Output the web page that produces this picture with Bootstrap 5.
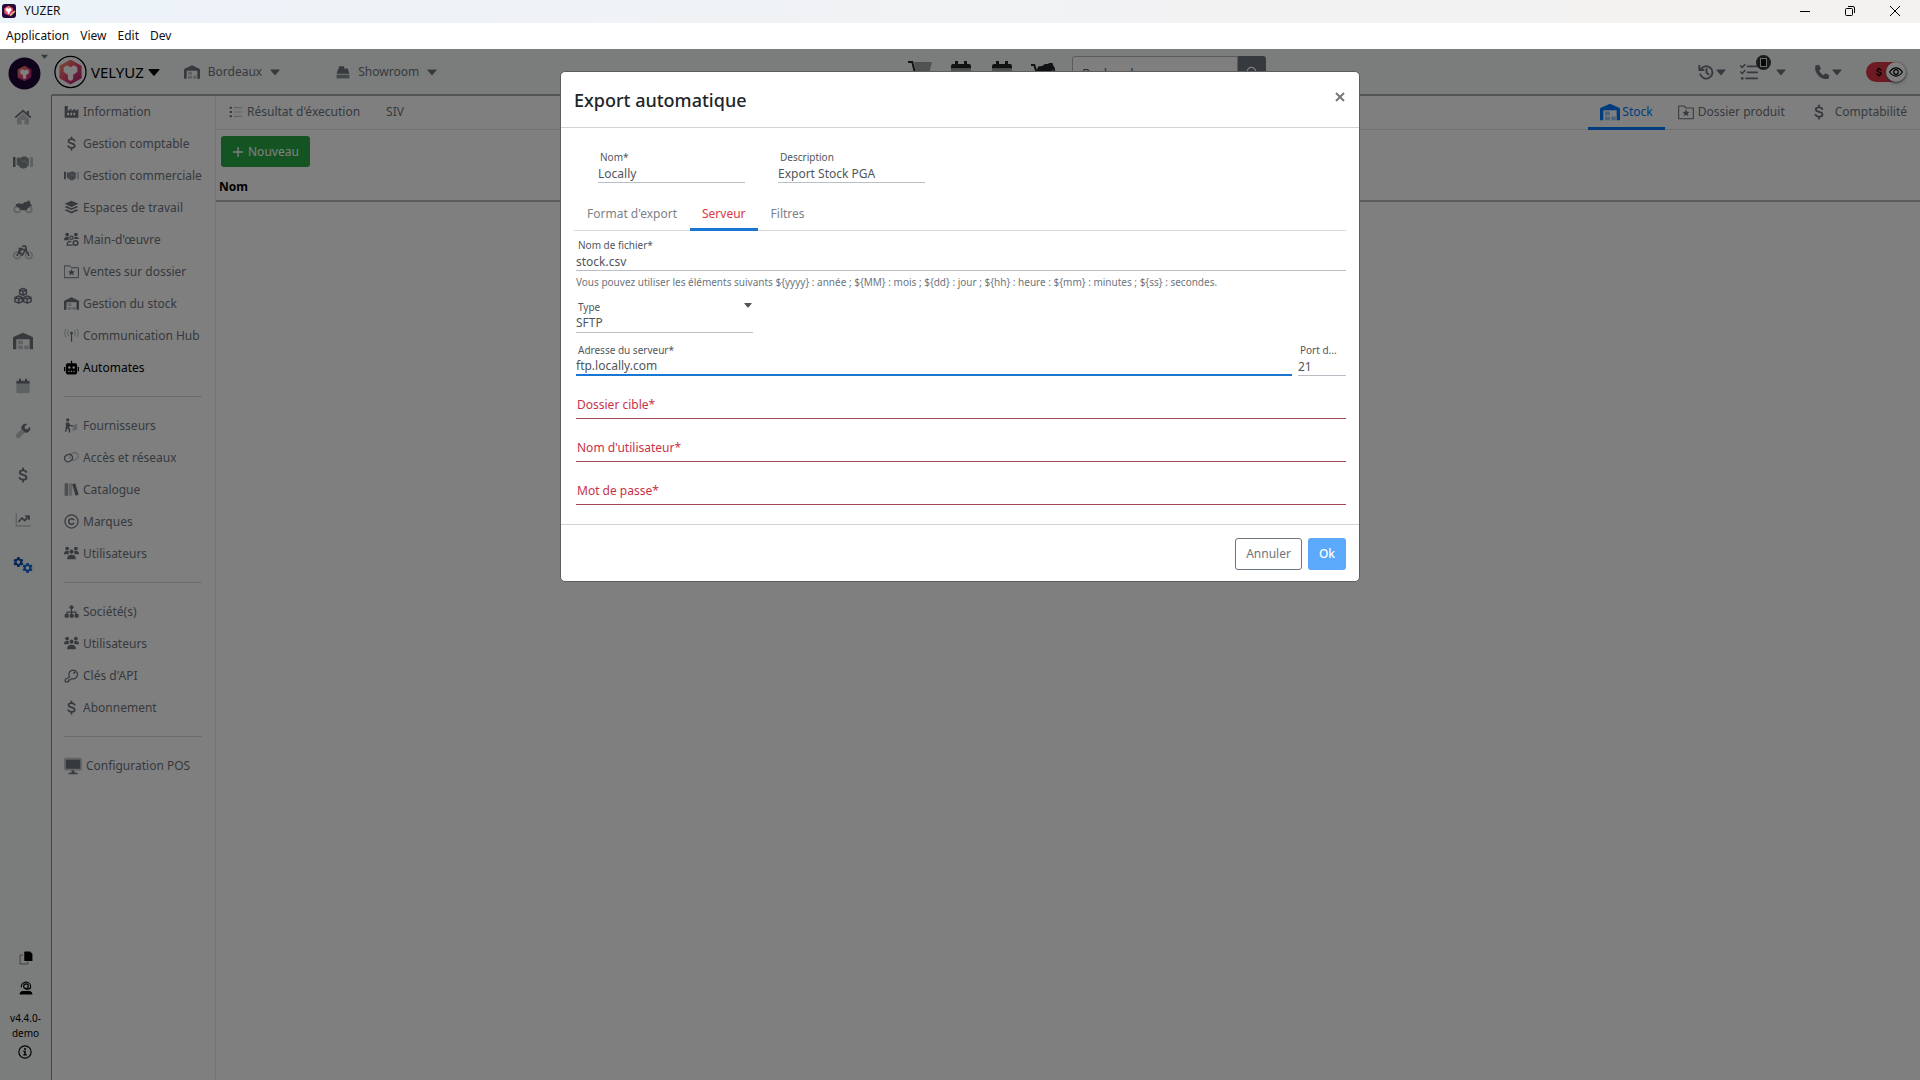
<!DOCTYPE html>
<html lang="fr">
<head>
<meta charset="utf-8">
<meta name="viewport" content="width=device-width, initial-scale=1">
<title>YUZER</title>
<link href="https://cdn.jsdelivr.net/npm/bootstrap@5.3.0/dist/css/bootstrap.min.css" rel="stylesheet">
<style>
:root{--rail:52px;--muted:#6c757d;--blue:#1976d2}
body{font-family:"Noto Sans","Open Sans",sans-serif;font-size:12px;line-height:20px;color:#212529;overflow:hidden}
a{color:inherit;text-decoration:none}
svg{fill:currentColor;flex:none;display:block}
.s2{opacity:.4}
.ln{fill:none;stroke:currentColor;stroke-width:2;stroke-linecap:round;stroke-linejoin:round}
.i10{width:10px;height:10px}.i12{width:12px;height:12px}.i14{width:14px;height:14px}.i16{width:16px;height:16px}.i18{width:18px;height:18px}.i20{width:20px;height:20px}.i24{width:24px;height:24px}
.titlebar{height:23px;background:linear-gradient(90deg,#ecf3f9,#f3f2f2 75%,#f3f2f0);color:#111;padding:0 3px 2px 2px}
.winbtn{width:45px;border:0;background:none;padding:0;display:flex;justify-content:center;align-items:center;color:#000}
.menubar{height:26px;background:#fff;color:#111;gap:11px;padding:0 6px}
.chrome-bg{background:#f6faf8}
.rail-col{width:var(--rail)}
.rail-head{height:46px}
.rail{border-right:1px solid #8b9090;color:var(--muted)}
.rail-list{height:492px}
.rail-item{flex:1 1 0;display:flex;align-items:center;justify-content:center;padding-right:6px}
.rail-foot{gap:16px;padding-bottom:21px;color:#000}
.topbar{height:47px;border-bottom:2px solid #a3a8a8}
.site-menu{color:var(--muted)}
.site-left{width:856px}
.brand{font-size:15px;color:#000;margin-left:2px}
.quick{gap:17px;color:#212529}
.finder .form-control{width:166px;height:32px;font-size:13px;border:1px solid #b0b4b8;border-radius:3px 0 0 3px;padding:2px 9px 0}
.finder .btn{width:28px;height:32px;padding:0;background:var(--muted);border:0;color:#fff;border-radius:0 3px 3px 0}
.tools{padding-right:14px}
.tools a{display:flex;align-items:center;gap:2px}
.tools .todo{gap:18px;margin:0 28px 0 14px}
.todo-count{position:absolute;left:16px;top:-8px}
.side{width:164px;border-right:1px solid #e6e6e6;color:var(--muted);padding:0 13px 0 12px}
.side-link{height:32px;display:flex;align-items:center;gap:4px;white-space:nowrap;padding-bottom:1px}
.side-link svg{width:15px;height:15px}
.side-link svg.i18{width:18px;height:18px}
.side-link.on{color:#000}
.side hr{margin:12px 0 13px;border-color:#777;opacity:.3}
.tabs-top{height:34px;border-bottom:1px solid #dee2e6;color:var(--muted)}
.tabs-top a{display:flex;align-items:center;gap:4px;height:34px;padding:0 13px;border-bottom:3px solid transparent}
.tabs-top a.on{color:#007bff;border-color:#007bff;gap:2px;padding:0 12px}
.list-tools{padding:6px 5px 4px}
.btn-new{background:#28a745;color:#fff;font-size:12px;height:31px;padding:0 10px;border-radius:3px;display:flex;align-items:center;gap:4px}
.grid-head th{padding:5px 3px 3px;border-bottom:2px solid #b5b8bb;color:#000;height:30px}
.switch-pill{width:40px;height:20px;border-radius:10px;background:#dc3545;display:flex;align-items:center;justify-content:space-between;padding-left:8px}
.switch-knob{width:20px;height:20px;border-radius:50%;background:#fff;color:#000;display:flex;align-items:center;justify-content:center;box-shadow:0 1px 3px #555}
.version{font-size:10px;line-height:15px;text-align:center}
.shade{position:absolute;inset:0;background:rgba(0,0,0,.5)}
.dialog-layer{position:absolute;inset:0}
.dialog-layer .modal-dialog{max-width:800px;margin:22px auto 0}
.dialog-layer .modal-content{border:1px solid #5d5d5d;border-radius:5px;background:#fff}
.dialog-layer .modal-header{height:56px;padding:0 14px 0 13px;border-bottom:1px solid #d0d4d6}
.dialog-layer .modal-title{font-size:18px;line-height:28px;font-weight:500}
.dialog-layer .modal-body{padding:22px 13px 19px 15px}
.dialog-layer .modal-footer{height:57px;padding:1px 13px 0;gap:6px;border-top:1px solid #d0d4d6}
.dialog-layer .modal-footer>*{margin:0}
.shut{border:0;background:none;padding:0;width:10px;color:#777;margin-bottom:6px}
.pair{gap:33px;padding-left:22px}
.fld{position:relative;color:#50565c}
.fld label{display:block;font-size:10px;line-height:14px;padding-left:2px;white-space:nowrap}
.fld input,.fld select{display:block;width:100%;height:19px;border:0;border-bottom:1px solid #b9bfc4;border-radius:0;padding:0;font-size:12px;line-height:18px;color:#50565c;background:none;outline:0;appearance:none}
.fld.now input{border-bottom:2px solid var(--blue)}
.fld.need{padding-top:14px;color:#c8324a}
.fld.need input{border-color:#a34855}
.fld.need label{position:absolute;left:0;bottom:5px;font-size:12px;line-height:18px;padding-left:1px}
.short{width:147px}.kind{width:177px}.port{width:48px}
.fld .drop{position:absolute;right:1px;top:1px}
.dtabs{height:41px;border-bottom:1px solid #d5dadd;margin:7px 0 7px -2px;color:#7b8289}
.dtabs a{height:41px;padding:9px 13px 0;display:flex;align-items:center;border-bottom:3px solid transparent}
.dtabs a.on{color:#dc3545;border-color:var(--blue);padding:9px 12px 0}
.hint{font-size:10px;line-height:18px;color:var(--muted);margin:2px 0 9px}
.stack{gap:10px}
.duo{gap:6px}
.btn-act{height:32px;font-size:12px;padding:0 10px;border-radius:3px}
.btn-cancel{border:1px solid #6c757d;color:#6c757d}
.btn-ok{background:#5aa9fb;color:#fff;font-weight:500}
</style>
<script src="https://cdn.jsdelivr.net/npm/bootstrap@5.3.0/dist/js/bootstrap.bundle.min.js"></script>
</head>
<body class="d-flex flex-column vh-100">
<svg width="0" height="0" class="position-absolute" aria-hidden="true">
<defs><linearGradient id="hot" x1="0" y1="0" x2="1" y2="1"><stop offset="0" stop-color="#f6a06a"/><stop offset=".5" stop-color="#e8456e"/><stop offset="1" stop-color="#9c1f7d"/></linearGradient></defs>
<symbol id="caret" viewBox="0 0 12 12"><path d="M1 3h10q.8.2.3 1L6.600 9.600q-.6.5-1.200 0L.7 4Q.3 3.200 1 3z"/></symbol>
<symbol id="home" viewBox="0 0 24 24"><path class="s2" d="M12 7l-8 7v8h6v-6h4v6h6v-8z"/><path d="M12 2L.8 12l1.600 1.800L12 5.400l9.600 8.400 1.600-1.800-3.200-2.900V4h-3v2.500z"/></symbol>
<symbol id="shake" viewBox="0 0 24 24"><path d="M0 6h3v12H0z"/><path d="M4.500 7H9l3-1.500h3.500L19 8v7.500l-2.500 3-4 1.500-4-1.500-2.500-3H4.500z" opacity=".85"/><path d="M10 10.500q2 2 4.500 0l4 4" fill="none" stroke="#fff" stroke-opacity=".5"/><path class="s2" d="M20.500 6H24v12h-3.500z"/></symbol>
<symbol id="moto" viewBox="0 0 24 24"><path d="M3 9l4-1.500 4 1 3-2.500h4l-1.500-1.500H20l1 4 2 2-3 .5-4 5h-6l-3-3.500L4 11z"/><circle class="ln s2" cx="5" cy="15" r="3.500"/><circle class="ln s2" cx="19" cy="15" r="3.500"/></symbol>
<symbol id="bike" viewBox="0 0 24 24"><g class="ln"><circle class="s2" cx="5" cy="16" r="4"/><circle class="s2" cx="19" cy="16" r="4"/><path d="M5 16l4-7h6l-4 7-4-5M15 9l4 7M12 5h3l1 4"/></g><path d="M6 7h6l-3 5z"/></symbol>
<symbol id="boxes" viewBox="0 0 24 24"><g class="ln"><path d="M12 2l4.500 2v5L12 11 7.500 9V4zM6.300 12l4.700 2v5.500l-4.700 2-5-2V14zM17.700 12l5 2v5.500l-5 2-4.700-2V14zM7.500 4L12 6l4.500-2M12 6v5M1.500 14l4.800 2 4.700-2M6.300 16v5M13 14l4.700 2 5-2M17.700 16v5"/></g></symbol>
<symbol id="depot" viewBox="0 0 24 24"><path d="M0 22V8.500q0-1 1-1.500L12 2l11 5q1 .5 1 1.500V22h-4V10H4v12z"/><path class="s2" d="M6 11.500h6V16H6zM6 17.500h6V22H6zM13.500 17.500H19V22h-5.500z"/></symbol>
<symbol id="cal" viewBox="0 0 24 24"><path class="s2" d="M2 9h20v12q0 2-2 2H4q-2 0-2-2z"/><path d="M2 8.500V6q0-2 2-2h2V1h3v3h6V1h3v3h2q2 0 2 2v2.500z"/></symbol>
<symbol id="wrench" viewBox="0 0 24 24"><path class="s2" d="M10 9l5 5-8 8.500q-2.500 1.500-5-1-2-2.500 0-4.500z"/><path d="M22.500 5.500L18.500 9.500l-3.500-.6-.6-3.500 4-4C14 0 9 3 9.500 8.500l6 6C21 15 24 10 22.500 5.500z"/></symbol>
<symbol id="usd" viewBox="0 0 24 24"><path class="ln" style="stroke-width:2.800" d="M17 7.500C16 5.500 14 5 12 5c-3 0-4.800 1.200-4.800 3.400 0 4.600 10 2.400 10 7.200C17.200 18 15 19 12 19c-2.400 0-4.400-.8-5.200-2.800M12 2v3M12 19v3"/></symbol>
<symbol id="chart" viewBox="0 0 24 24"><path class="ln s2" d="M2 3v18h21"/><path class="ln" style="stroke-width:2.600" d="M6 14l4.500-5 4 4L20 7M16 6h5v5"/></symbol>
<symbol id="cog" viewBox="0 0 24 24"><path fill-rule="evenodd" d="M9.500 1h5l.6 3.200 2.400 1.400 3-1.100 2.500 4.300-2.500 2.100v2.200l2.500 2.100-2.500 4.300-3-1.100-2.400 1.400-.6 3.200h-5l-.6-3.200-2.400-1.400-3 1.100L1 15.200l2.500-2.100v-2.200L1 8.800l2.500-4.300 3 1.100 2.400-1.400zM12 8a4 4 0 100 8 4 4 0 000-8z"/></symbol>
<symbol id="cogs" viewBox="0 0 24 24"><use href="#cog" width="13" height="13" y="2" color="#0a4fae"/><use href="#cog" width="13" height="13" x="11" y="9"/></symbol>
<symbol id="factory" viewBox="0 0 24 24"><path fill-rule="evenodd" d="M1 3h5v8l6-4v4l6-4v4l5-3v14H1zM5 14v4h3v-4zm5 0v4h3v-4zm5 0v4h3v-4z"/></symbol>
<symbol id="layers" viewBox="0 0 24 24"><path d="M12 1l11 5-11 5L1 6zM4 9.500l8 3.700 8-3.700 3 1.500-11 5-11-5zM4 14.700l8 3.700 8-3.700 3 1.500-11 5.500-11-5.500z"/></symbol>
<symbol id="crew" viewBox="0 0 24 24"><circle cx="5" cy="4" r="3"/><circle cx="19" cy="4" r="3"/><circle cx="12" cy="9" r="3.300"/><path d="M0 13q0-5 4-5h3.500l0 5zM24 13q0-5-4-5h-3.500l0 5zM5 21q0-7 7-7t7 7z"/></symbol>
<symbol id="staff" viewBox="0 0 24 24"><circle cx="5" cy="4" r="3"/><circle cx="19" cy="4" r="3"/><circle class="ln" cx="12" cy="9" r="2.600"/><path d="M0 13q0-5 4-5h3.500l0 5zM24 11q0-3-4-3h-3.500l0 3z"/><path class="ln" d="M5 21q0-6 6-6M5 21h8"/><circle class="ln" style="stroke-width:2.600" cx="18.500" cy="17.500" r="3.600"/></symbol>
<symbol id="folder" viewBox="0 0 24 24"><path class="ln" style="stroke-width:1.600" d="M1 3h8l3 3h11v16H1z"/><path d="M12 8l1.600 3.600 3.900.3-3 2.500 1 3.800-3.500-2.100-3.500 2.100 1-3.800-3-2.500 3.900-.3z"/></symbol>
<symbol id="hub" viewBox="0 0 24 24"><circle cx="12" cy="8" r="2.400"/><path d="M11 9h2v13h-2z"/><path class="ln s2" d="M7 4q-2 4 0 8M3 2q-3.500 6 0 12M17 4q2 4 0 8M21 2q3.500 6 0 12"/></symbol>
<symbol id="bot" viewBox="0 0 24 24"><path fill-rule="evenodd" d="M11 1h2v4h5q3 0 3 3v12q0 3-3 3H6q-3 0-3-3V8q0-3 3-3h5zM8.500 10a2 2 0 100 4 2 2 0 000-4zm7 0a2 2 0 100 4 2 2 0 000-4zM7 17v2h2v-2zm4 0v2h2v-2zm4 0v2h2v-2zM0 11h2v7H0zM22 11h2v7h-2z"/></symbol>
<symbol id="carry" viewBox="0 0 24 24"><circle cx="6" cy="3" r="2.600"/><path d="M3 7h5l2 4h4v2H9l-1 2 2 3v5H7.500v-4L5 16l-1 6H1.500L3 14z"/><path class="s2" d="M14 12l7-3v9l-7 3z"/></symbol>
<symbol id="rings" viewBox="0 0 24 24"><rect class="ln" x="1" y="7" width="13" height="11" rx="5.500" transform="rotate(-30 8 13)"/><rect class="ln s2" x="10" y="5" width="13" height="11" rx="5.500" transform="rotate(-30 16 11)"/></symbol>
<symbol id="books" viewBox="0 0 24 24"><path d="M1 2h5.500v20H1z" opacity=".7"/><path class="s2" d="M7.500 2H13v20H7.500z"/><path d="M13 3.500l5-1.500L23.500 20.500 18.500 22z"/></symbol>
<symbol id="copyr" viewBox="0 0 24 24"><circle class="ln" cx="12" cy="12" r="10.500"/><path class="ln" style="stroke-width:2.400" d="M15.500 9c-3-3-8-1-8 3s5 6 8 3"/></symbol>
<symbol id="org" viewBox="0 0 24 24"><circle cx="12" cy="5" r="3.200"/><path d="M11 8h2v4h7v4h-2v-2h-5v2h-2v-2H6v2H4v-4h7z"/><rect x="1" y="15.500" width="6.500" height="6.500" rx="2"/><rect x="9" y="15.500" width="6.500" height="6.500" rx="2"/><rect x="17" y="15.500" width="6.500" height="6.500" rx="2"/></symbol>
<symbol id="key" viewBox="0 0 24 24"><path class="ln" d="M9 14.500a7 7 0 113.500 2.500L10 19H7.500v3H2v-4z"/><circle cx="16.500" cy="7.500" r="1.800"/></symbol>
<symbol id="screen" viewBox="0 0 24 24"><rect class="s2" x="0" y="1" width="24" height="17" rx="2"/><path d="M2.500 3.500h19v12h-19zM10 18h4v3h4v2H6v-2h4z"/></symbol>
<symbol id="list" viewBox="0 0 24 24"><path d="M1 3h4v3.500H1zM1 10.300h4v3.500H1zM1 17.500h4V21H1z"/><path class="s2" d="M8 3.500h15v2H8zM8 11h15v2H8zM8 18.500h15v2H8z"/></symbol>
<symbol id="plus" viewBox="0 0 12 12"><path d="M5.300 1h1.400v4.300H11v1.400H6.700V11H5.300V6.700H1V5.300h4.300z"/></symbol>
<symbol id="till" viewBox="0 0 24 24"><path d="M5 2h9v4h6l3 9H1l3-9h1z"/><path d="M1 16.500h22V23H1z" opacity=".8"/></symbol>
<symbol id="cart" viewBox="0 0 24 24"><path class="s2" d="M6 2h18l-3 12H8z"/><path d="M0 1h5l3.500 14H20v2H7L3.500 3H0z"/><circle cx="9" cy="20.500" r="2"/><circle cx="18.500" cy="20.500" r="2"/></symbol>
<symbol id="motocart" viewBox="0 0 24 24"><path d="M0 4h4l3.500 11H20v2H6L2.500 6H0z"/><path d="M7 6.500l4-.5 3-2h4l-1-1h4.500l1 3 1.500 2-2 .5-1 4-4-.5-4 2-4-1-3 0z"/><circle class="ln" cx="21" cy="11" r="2.500"/><circle class="ln" cx="9" cy="11" r="2.500"/></symbol>
<symbol id="lens" viewBox="0 0 24 24"><circle class="ln" cx="11" cy="11" r="7"/><path class="ln" d="M16 16l6 6"/></symbol>
<symbol id="past" viewBox="0 0 24 24"><path class="ln" style="stroke-width:2.800" d="M4 8.500a9.300 9.300 0 11-.5 7M2 2.500v6.500h6.500M12.800 7.500v5.500l3 2.500"/></symbol>
<symbol id="tasks" viewBox="0 0 24 24"><path class="ln" style="stroke-width:2.200" d="M1 4l2 2 3.500-4M1 12l2 2 3.500-4M10 4.500h13M10 12.500h13M8 20.500h15"/><circle cx="3" cy="20.500" r="1.800"/></symbol>
<symbol id="tel" viewBox="0 0 24 24"><path d="M7.500 1L2 2.300Q.5 12 7 17.500 12 23.500 21.700 22.500L23 16.800l-6-3-2.700 2.900Q9.500 14.500 7.700 9.700L10.500 7z"/></symbol>
<symbol id="eye" viewBox="0 0 24 24"><path class="ln" d="M1 12Q6 5 12 5t11 7q-5 7-11 7T1 12z"/><circle class="ln" cx="12" cy="12" r="4"/></symbol>
<symbol id="copy" viewBox="0 0 24 24"><path d="M10 1h9l4 4v12H10q-1 0-1-1V2q0-1 1-1z"/><path class="ln s2" d="M6 7H2v15h13v-3"/></symbol>
<symbol id="agent" viewBox="0 0 24 24"><path class="ln" d="M4 10a8 8 0 0116 0q0 4-5 4h-3"/><circle class="ln" cx="12" cy="9" r="4"/><path d="M1 23q0-6 6-6h10q6 0 6 6z"/></symbol>
<symbol id="info" viewBox="0 0 24 24"><circle class="ln" cx="12" cy="12" r="10.500"/><circle cx="12" cy="6.800" r="1.700"/><path d="M9 10h4.300v6H15v2H9v-2h1.700v-4H9z"/></symbol>
<symbol id="hexy" viewBox="0 0 24 24"><path fill="url(#hot)" d="M12 0l10.500 6v12L12 24 1.500 18V6z"/><path fill="#fff" d="M5.500 7.500L9 5.500l3 2 3-2 3.500 2v4.500l-4 2.500V19L12 20.500 9.500 19v-4.500l-4-2.500z"/></symbol>
</svg>

<header class="titlebar d-flex align-items-stretch">
  <div class="d-flex align-items-center gap-2 me-auto">
    <svg width="14" height="14" viewBox="0 0 24 24"><rect width="24" height="24" rx="5" fill="#24093a"/><use href="#hexy" x="3" y="3" width="17" height="17"/><path d="M14 20l8-8" stroke="#f4b37b" stroke-width="3"/></svg>
    <span>YUZER</span>
  </div>
  <button class="winbtn" aria-label="Réduire"><svg class="i10" viewBox="0 0 10 10"><path d="M0 5h10v1H0z"/></svg></button>
  <button class="winbtn" aria-label="Restaurer"><svg class="i10" viewBox="0 0 10 10" stroke="#000"><g fill="none"><rect x=".5" y="2.500" width="7" height="7" rx="1"/><path d="M3 .5h5q1.500 0 1.500 1.500v5"/></g></svg></button>
  <button class="winbtn" aria-label="Fermer"><svg class="i10" viewBox="0 0 10 10"><path d="M0 0l10 10M10 0L0 10" stroke="#000"/></svg></button>
</header>
<nav class="menubar d-flex align-items-center">
  <a href="#">Application</a><a href="#">View</a><a href="#">Edit</a><a href="#">Dev</a>
</nav>

<main class="position-relative flex-grow-1 d-flex overflow-hidden">
  <div class="rail-col chrome-bg d-flex flex-column flex-shrink-0">
    <div class="rail-head d-flex justify-content-end align-items-start pt-1 pe-1">
      <svg class="mt-1" width="33" height="33" viewBox="0 0 34 34"><circle cx="17" cy="17" r="16.500" fill="#1e0638"/><use href="#hexy" x="9" y="9" width="16" height="16"/></svg>
      <svg width="7" height="7" style="color:#6c757d"><use href="#caret"/></svg>
    </div>
    <nav class="rail flex-grow-1 d-flex flex-column">
      <div class="rail-list d-flex flex-column">
        <a class="rail-item" href="#" aria-label="Accueil"><svg class="i18"><use href="#home"/></svg></a>
        <a class="rail-item" href="#" aria-label="Commerce"><svg class="i20"><use href="#shake"/></svg></a>
        <a class="rail-item" href="#" aria-label="Motos"><svg class="i20"><use href="#moto"/></svg></a>
        <a class="rail-item" href="#" aria-label="Vélos"><svg class="i20"><use href="#bike"/></svg></a>
        <a class="rail-item" href="#" aria-label="Pièces"><svg class="i18"><use href="#boxes"/></svg></a>
        <a class="rail-item" href="#" aria-label="Stock"><svg class="i20"><use href="#depot"/></svg></a>
        <a class="rail-item" href="#" aria-label="Agenda"><svg class="i16"><use href="#cal"/></svg></a>
        <a class="rail-item" href="#" aria-label="Atelier"><svg class="i16"><use href="#wrench"/></svg></a>
        <a class="rail-item" href="#" aria-label="Comptabilité"><svg class="i16"><use href="#usd"/></svg></a>
        <a class="rail-item" href="#" aria-label="Statistiques"><svg class="i16"><use href="#chart"/></svg></a>
        <a class="rail-item" href="#" aria-label="Configuration" style="color:#0f6bdc"><svg class="i20"><use href="#cogs"/></svg></a>
      </div>
      <div class="rail-foot mt-auto d-flex flex-column align-items-center">
        <a href="#" aria-label="Copier"><svg class="i14"><use href="#copy"/></svg></a>
        <a href="#" aria-label="Assistance"><svg class="i14"><use href="#agent"/></svg></a>
        <div class="version">v4.4.0-<br>demo<a href="#" aria-label="À propos" class="d-flex justify-content-center pt-1"><svg class="i14"><use href="#info"/></svg></a></div>
      </div>
    </nav>
  </div>

  <div class="flex-grow-1 d-flex flex-column bg-white">
    <div class="topbar chrome-bg d-flex align-items-center site-menu">
      <div class="site-left d-flex align-items-center">
        <a href="#" class="brand d-flex align-items-center">
          <svg width="33" height="34" viewBox="0 0 34 34"><circle cx="17" cy="17" r="16" fill="#fff" stroke="#000" stroke-width="1.300"/><use href="#hexy" x="4" y="4" width="26" height="26"/></svg>
          <span class="ps-1">VELYUZ</span><svg class="i12 ms-1"><use href="#caret"/></svg>
        </a>
        <a href="#" class="d-flex align-items-center gap-2 ms-4"><svg class="i16"><use href="#depot"/></svg>Bordeaux<svg class="i10"><use href="#caret"/></svg></a>
        <a href="#" class="d-flex align-items-center gap-2 ms-5 ps-2"><svg class="i14"><use href="#till"/></svg>Showroom<svg class="i10"><use href="#caret"/></svg></a>
      </div>
      <div class="quick d-flex align-items-center">
        <svg class="i24"><use href="#cart"/></svg>
        <svg class="i24"><use href="#cal"/></svg>
        <svg class="i24"><use href="#cal"/></svg>
        <svg class="i24"><use href="#motocart"/></svg>
        <div class="finder d-flex"><input class="form-control" type="search" placeholder="Rechercher" aria-label="Rechercher"><button class="btn" aria-label="Lancer la recherche"><svg class="i14 mx-auto"><use href="#lens"/></svg></button></div>
      </div>
      <div class="tools d-flex align-items-center ms-auto">
        <a href="#" aria-label="Historique"><svg class="i16"><use href="#past"/></svg><svg class="i10"><use href="#caret"/></svg></a>
        <a href="#" aria-label="Tâches" class="todo"><span class="position-relative"><svg class="i18"><use href="#tasks"/></svg>
          <svg class="todo-count" width="15" height="15" viewBox="0 0 15 15"><circle cx="7.500" cy="7.500" r="7.500" fill="#343a40"/><rect x="4.500" y="3.500" width="6" height="8" fill="#111" stroke="#ddd"/></svg></span>
          <svg class="i10"><use href="#caret"/></svg></a>
        <a href="#" aria-label="Téléphone" class="me-4"><svg class="i16"><use href="#tel"/></svg><svg class="i10"><use href="#caret"/></svg></a>
        <label class="switch-pill"><input type="checkbox" class="visually-hidden" checked aria-label="Afficher les montants"><svg class="i10 text-black"><use href="#usd"/></svg><span class="switch-knob"><svg class="i14"><use href="#eye"/></svg></span></label>
      </div>
    </div>
    <div class="flex-grow-1 d-flex">
      <nav class="side flex-shrink-0">
        <a class="side-link" href="#"><svg><use href="#factory"/></svg>Information</a>
        <a class="side-link" href="#"><svg><use href="#usd"/></svg>Gestion comptable</a>
        <a class="side-link" href="#"><svg><use href="#shake"/></svg>Gestion commerciale</a>
        <a class="side-link" href="#"><svg><use href="#layers"/></svg>Espaces de travail</a>
        <a class="side-link" href="#"><svg><use href="#staff"/></svg>Main-d'œuvre</a>
        <a class="side-link" href="#"><svg><use href="#folder"/></svg>Ventes sur dossier</a>
        <a class="side-link" href="#"><svg><use href="#depot"/></svg>Gestion du stock</a>
        <a class="side-link" href="#"><svg><use href="#hub"/></svg>Communication Hub</a>
        <a class="side-link on" href="#"><svg><use href="#bot"/></svg>Automates</a>
        <hr>
        <a class="side-link" href="#"><svg><use href="#carry"/></svg>Fournisseurs</a>
        <a class="side-link" href="#"><svg><use href="#rings"/></svg>Accès et réseaux</a>
        <a class="side-link" href="#"><svg><use href="#books"/></svg>Catalogue</a>
        <a class="side-link" href="#"><svg><use href="#copyr"/></svg>Marques</a>
        <a class="side-link" href="#"><svg><use href="#crew"/></svg>Utilisateurs</a>
        <hr>
        <a class="side-link" href="#"><svg><use href="#org"/></svg>Société(s)</a>
        <a class="side-link" href="#"><svg><use href="#crew"/></svg>Utilisateurs</a>
        <a class="side-link" href="#"><svg><use href="#key"/></svg>Clés d'API</a>
        <a class="side-link" href="#"><svg><use href="#usd"/></svg>Abonnement</a>
        <hr>
        <a class="side-link" href="#"><svg class="i18"><use href="#screen"/></svg>Configuration POS</a>
      </nav>
      <section class="flex-grow-1">
        <nav class="tabs-top d-flex">
          <a href="#"><svg class="i14"><use href="#list"/></svg>Résultat d'éxecution</a>
          <a href="#" class="me-auto">SIV</a>
          <a href="#" class="on"><svg class="i20"><use href="#depot"/></svg>Stock</a>
          <a href="#"><svg class="i16"><use href="#folder"/></svg>Dossier produit</a>
          <a href="#"><svg class="i16 me-1"><use href="#usd"/></svg>Comptabilité</a>
        </nav>
        <div class="list-tools"><button class="btn btn-new"><svg class="i12"><use href="#plus"/></svg>Nouveau</button></div>
        <table class="w-100 grid-head"><thead><tr><th scope="col" class="align-bottom">Nom</th></tr></thead></table>
      </section>
    </div>
  </div>

  <div class="shade"></div>
  <div class="dialog-layer" role="dialog" aria-modal="true" aria-labelledby="dlgTitle">
    <div class="modal-dialog">
      <form class="modal-content">
        <div class="modal-header">
          <h1 class="modal-title" id="dlgTitle">Export automatique</h1>
          <button type="button" class="shut" aria-label="Fermer"><svg class="i10" viewBox="0 0 10 10"><path d="M1 1l8 8M9 1L1 9" stroke="currentColor" stroke-width="2"/></svg></button>
        </div>
        <div class="modal-body">
          <div class="pair d-flex">
            <div class="fld short"><label for="f1">Nom*</label><input id="f1" value="Locally"></div>
            <div class="fld short"><label for="f2">Description</label><input id="f2" value="Export Stock PGA"></div>
          </div>
          <nav class="dtabs d-flex"><a href="#">Format d'export</a><a href="#" class="on">Serveur</a><a href="#">Filtres</a></nav>
          <div>
            <div class="fld"><label for="f3">Nom de fichier*</label><input id="f3" value="stock.csv"></div>
            <p class="hint">Vous pouvez utiliser les éléments suivants ${yyyy} : année ; ${MM} : mois ; ${dd} : jour ; ${hh} : heure : ${mm} : minutes ; ${ss} : secondes.</p>
            <div class="stack d-flex flex-column">
              <div class="fld kind"><label for="f4">Type</label><select id="f4"><option>SFTP</option></select><svg class="drop" width="8" height="8"><use href="#caret"/></svg></div>
              <div class="duo d-flex">
                <div class="fld now flex-grow-1"><label for="f5">Adresse du serveur*</label><input id="f5" value="ftp.locally.com"></div>
                <div class="fld port"><label for="f6">Port d...</label><input id="f6" value="21"></div>
              </div>
              <div class="fld need"><input id="f7"><label for="f7">Dossier cible*</label></div>
              <div class="fld need"><input id="f8"><label for="f8">Nom d'utilisateur*</label></div>
              <div class="fld need"><input id="f9" type="password"><label for="f9">Mot de passe*</label></div>
            </div>
          </div>
        </div>
        <div class="modal-footer">
          <button type="button" class="btn btn-act btn-cancel">Annuler</button>
          <button type="submit" class="btn btn-act btn-ok">Ok</button>
        </div>
      </form>
    </div>
  </div>
</main>
</body>
</html>
